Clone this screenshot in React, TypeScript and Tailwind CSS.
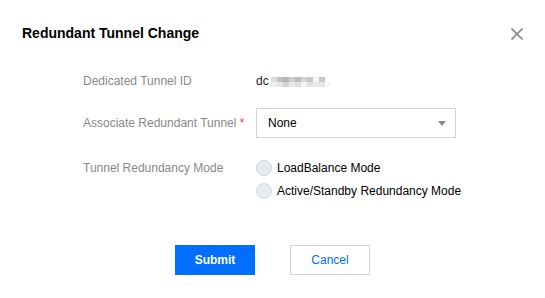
export default function App() {
  // mosaic blocks standing in for the masked tunnel id
  const mosaic = [
    ["#dcdcdc", "#f0f0f0"],
    ["#c2c2c2", "#e6e6e6"],
    ["#b5b5b5", "#d4d4d4"],
    ["#cccccc", "#e9e9e9"],
    ["#bdbdbd", "#dedede"],
    ["#d6d6d6", "#f3f3f3"],
    ["#c6c6c6", "#e1e1e1"],
    ["#f4f4f4", "#ebebeb"],
    ["#c8c8c8", "#e8e8e8"],
    ["#ffffff", "#f7f7f7"],
  ];

  return (
    <div className="w-[545px] h-[298px] bg-white font-['Liberation_Sans',Arial,sans-serif] text-[12px]">
      <div className="flex justify-between items-center pl-[22px] pr-[22px] pt-[23px]">
        <h1 className="text-[14px] leading-5 font-bold text-black">Redundant Tunnel Change</h1>
        <svg width="12" height="12" viewBox="0 0 12 12" className="mt-[2px]">
          <path d="M0.5 0.5 L11.5 11.5 M11.5 0.5 L0.5 11.5" stroke="#888" strokeWidth="1.6" />
        </svg>
      </div>

      <div className="pl-[83px] mt-[28px]">
        <div className="flex items-center leading-5">
          <div className="w-[173px] text-[#888]">Dedicated Tunnel ID</div>
          <div className="flex items-center text-[#222]">
            <span>dc</span>
            <div className="flex ml-[2px] mt-[1px]">
              {mosaic.map((c, i) => (
                <div key={i} className="flex flex-col">
                  <div className="w-[6px] h-[5px]" style={{ background: c[0] }} />
                  <div className="w-[6px] h-[5px]" style={{ background: c[1] }} />
                </div>
              ))}
            </div>
          </div>
        </div>

        <div className="flex items-center mt-[17px]">
          <div className="w-[173px] text-[#888]">
            Associate Redundant Tunnel <span className="text-[#e54545]">*</span>
          </div>
          <div className="w-[200px] h-[30px] border border-[#cfd5de] flex items-center justify-between pl-[11px] pr-[9px] text-black">
            <span>None</span>
            <svg width="8" height="5" viewBox="0 0 8 5">
              <path d="M0 0 H8 L4 5 Z" fill="#888" />
            </svg>
          </div>
        </div>

        <div className="flex mt-[20px] leading-5">
          <div className="w-[173px] text-[#888]">Tunnel Redundancy Mode</div>
          <div className="flex flex-col gap-[3px] text-black">
            {["LoadBalance Mode", "Active/Standby Redundancy Mode"].map((t) => (
              <label key={t} className="flex items-center gap-[5px]">
                <span className="w-[16px] h-[16px] rounded-full border border-[#d4d9e0] bg-[#e7eaef]" />
                <span>{t}</span>
              </label>
            ))}
          </div>
        </div>
      </div>

      <div className="flex justify-center gap-[35px] mt-[44px]">
        <button className="w-[80px] h-[30px] bg-[#006eff] text-white font-bold">Submit</button>
        <button className="w-[80px] h-[30px] border border-[#cfd5de] text-[#006eff]">Cancel</button>
      </div>
    </div>
  );
}
